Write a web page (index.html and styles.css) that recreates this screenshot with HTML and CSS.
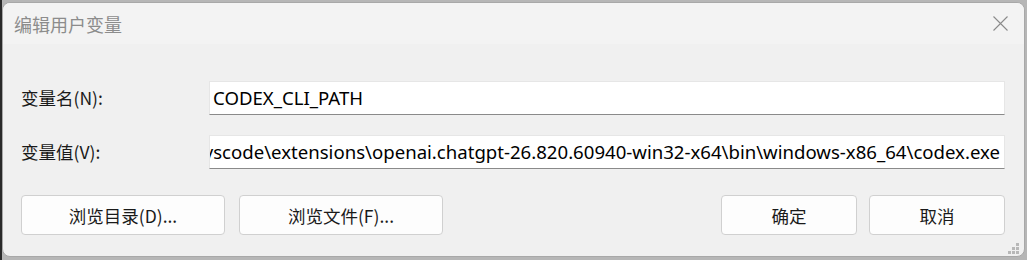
FILE: index.html
```html
<!DOCTYPE html>
<html lang="zh-CN">
<head>
<meta charset="utf-8">
<link rel="stylesheet" href="styles.css">
</head>
<body>
<div class="window">
  <div class="titlebar">
    <span class="title">编辑用户变量</span>
    <svg class="close" width="15" height="15" viewBox="0 0 15 15"><path d="M0.5 0.5 L14.5 14.5 M14.5 0.5 L0.5 14.5" stroke="#8a8a8a" stroke-width="1.1" fill="none"/></svg>
  </div>
  <div class="content">
    <div class="form">
      <label class="label">变量名(N):</label>
      <div class="input"><span class="value">CODEX_CLI_PATH</span></div>
      <label class="label">变量值(V):</label>
      <div class="input scrolled"><span class="value">.vscode\extensions\openai.chatgpt-26.820.60940-win32-x64\bin\windows-x86_64\codex.exe</span></div>
    </div>
    <div class="buttons">
      <div class="group">
        <button class="btn wide">浏览目录(D)...</button>
        <button class="btn wide">浏览文件(F)...</button>
      </div>
      <div class="group right">
        <button class="btn">确定</button>
        <button class="btn">取消</button>
      </div>
    </div>
  </div>
  <svg class="grip" width="12" height="12" viewBox="0 0 12 12">
    <rect x="8" y="0" width="3" height="3" fill="#b8b8b8"/>
    <rect x="4" y="4" width="3" height="3" fill="#b8b8b8"/>
    <rect x="8" y="4" width="3" height="3" fill="#b8b8b8"/>
    <rect x="0" y="8" width="3" height="3" fill="#b8b8b8"/>
    <rect x="4" y="8" width="3" height="3" fill="#b8b8b8"/>
    <rect x="8" y="8" width="3" height="3" fill="#b8b8b8"/>
  </svg>
</div>
</body>
</html>
```
FILE: styles.css
```css
html, body {
  margin: 0;
  padding: 0;
  width: 1027px;
  height: 260px;
  overflow: hidden;
}
body {
  background: linear-gradient(to right, #2a2a2a 0, #2a2a2a 2px, #b6b6b6 2px);
  font-family: "Noto Sans", "Noto Sans CJK SC", sans-serif;
}
.window {
  position: relative;
  box-sizing: border-box;
  margin: 2px 0 0 2px;
  width: 1023px;
  height: 255px;
  background: #f0f0f0;
  border: 1px solid #a8a8a8;
  border-radius: 8px;
  overflow: hidden;
  display: flex;
  flex-direction: column;
}
.titlebar {
  height: 41px;
  flex: none;
  background: #f3f3f3;
  display: flex;
  align-items: center;
  justify-content: space-between;
  padding: 0 16px 0 11px;
}
.title {
  font-family: "Noto Sans CJK SC", sans-serif;
  font-size: 18px;
  color: #8c8c8c;
  line-height: 20px;
}
.close {
  display: block;
}
.content {
  padding: 37px 19px 0 18px;
  display: flex;
  flex-direction: column;
}
.form {
  display: grid;
  grid-template-columns: 188px 1fr;
  row-gap: 20px;
  align-items: center;
}
.label {
  font-family: "Noto Sans CJK SC", sans-serif;
  font-size: 17.5px;
  color: #1a1a1a;
  line-height: 20px;
}
.input {
  box-sizing: border-box;
  height: 34px;
  background: #ffffff;
  border: 1px solid #e6e6e6;
  border-bottom: 1px solid #8a8a8a;
  display: flex;
  align-items: center;
  padding: 0 4px 1px 3px;
  overflow: hidden;
  white-space: nowrap;
}
.input.scrolled {
  justify-content: flex-end;
}
.value {
  font-size: 18.6px;
  color: #000;
  line-height: 22px;
  flex: none;
}
.buttons {
  margin-top: 26px;
  display: flex;
  justify-content: space-between;
}
.group {
  display: flex;
  gap: 14px;
}
.group.right {
  gap: 12px;
}
.btn {
  box-sizing: border-box;
  width: 136px;
  height: 40px;
  background: #fdfdfd;
  border: 1px solid #d0d0d0;
  border-radius: 4px;
  font-family: "Noto Sans CJK SC", sans-serif;
  font-size: 17.5px;
  color: #1a1a1a;
  padding: 0;
}
.btn.wide {
  width: 204px;
}
.grip {
  position: absolute;
  right: 4px;
  bottom: 1px;
}
```
